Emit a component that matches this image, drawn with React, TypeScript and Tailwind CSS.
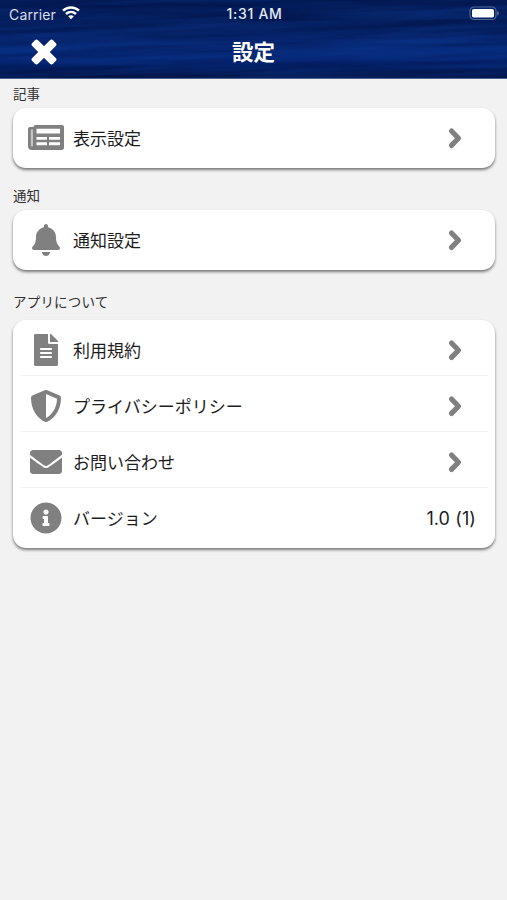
import type { ReactNode } from "react";
import { FaBell, FaEnvelope, FaFileAlt, FaInfoCircle, FaShieldAlt } from "react-icons/fa";

function Newspaper() {
  return (
    <svg className="h-[26px] w-9 shrink-0" viewBox="0 0 36 26">
      <path d="M2 2h5v23H4a4 4 0 0 1-4-4V4a2 2 0 0 1 2-2Z" fill="#808080" />
      <path d="M2.8 4.500h2.200v16a1.100 1.100 0 0 1-2.200 0Z" fill="#c4c4c4" />
      <path
        fillRule="evenodd"
        fill="#808080"
        d="M7.500 0H34a2 2 0 0 1 2 2v20.500a2.500 2.500 0 0 1-2.500 2.500H4a3 3 0 0 0 1.500-2V2a2 2 0 0 1 2-2ZM8.500 3.700v4.800h23.500V3.700ZM8.500 12v2.800h10.500V12ZM21 12v2.800h11V12ZM8.500 17.300v2.900h10.500v-2.900ZM21 17.300v2.900h11v-2.900Z"
      />
    </svg>
  );
}

function Chevron() {
  return (
    <svg className="mr-[25px] h-6 w-4 shrink-0" viewBox="0 0 16 24" fill="none" stroke="#808080" strokeWidth="5.2" strokeLinecap="round" strokeLinejoin="round">
      <path d="M4.500 5L11.500 12.200L4.500 19.400" />
    </svg>
  );
}

function Close() {
  return (
    <svg className="h-[26px] w-[26px]" viewBox="-13 -13 26 26" fill="white">
      <rect x="-14.700" y="-4.100" width="29.400" height="8.200" rx="2.200" transform="rotate(45)" />
      <rect x="-14.700" y="-4.100" width="29.400" height="8.200" rx="2.200" transform="rotate(-45)" />
    </svg>
  );
}

function Row({ icon, label, value, divided }: { icon: ReactNode; label: string; value?: string; divided?: boolean }) {
  return (
    <div className="mx-[7px] flex h-14 items-center border-b border-transparent pt-1 data-[divided=true]:border-[#f1f1f1]" data-divided={!!divided}>
      <div className="ml-[7px] flex w-[38px] shrink-0 justify-center text-[32px] text-[#808080]">{icon}</div>
      <span className="ml-2 grow text-[17px] leading-6 text-[#1c1c1c]">{label}</span>
      {value ? (
        <span className="mr-3 mt-0.5 font-['Inter','Liberation_Sans',sans-serif] text-[18px] leading-6 tracking-[0.1px] text-[#1c1c1c]">{value}</span>
      ) : (
        <Chevron />
      )}
    </div>
  );
}

function Card({ children, className }: { children: ReactNode; className: string }) {
  return (
    <div className={"ml-[13px] w-[482px] rounded-[13px] bg-white shadow-[0_2px_3px_rgba(0,0,0,0.5)] " + className}>
      {children}
    </div>
  );
}

function Heading({ children, className }: { children: ReactNode; className: string }) {
  return <h2 className={"pl-[13px] text-[13.5px] leading-5 text-[#303030] " + className}>{children}</h2>;
}

function Texture() {
  return (
    <svg className="absolute inset-0 h-full w-full" viewBox="0 0 507 79" preserveAspectRatio="none">
      <defs>
        <linearGradient id="sea" x1="0" y1="0" x2="0" y2="1">
          <stop offset="0" stopColor="#041b55" />
          <stop offset="0.3" stopColor="#041d5a" />
          <stop offset="0.5" stopColor="#06256c" />
          <stop offset="0.68" stopColor="#082d80" />
          <stop offset="0.82" stopColor="#04216a" />
          <stop offset="1" stopColor="#021647" />
        </linearGradient>
        <filter id="dark" x="0" y="0" width="100%" height="100%" colorInterpolationFilters="sRGB">
          <feTurbulence type="fractalNoise" baseFrequency="0.006 0.13" numOctaves="3" seed="8" />
          <feColorMatrix values="0 0 0 0 0  0 0 0 0 0.06  0 0 0 0 0.26  2 0 0 0 -0.7" />
        </filter>
        <filter id="light" x="0" y="0" width="100%" height="100%" colorInterpolationFilters="sRGB">
          <feTurbulence type="fractalNoise" baseFrequency="0.006 0.14" numOctaves="3" seed="21" />
          <feColorMatrix values="0 0 0 0 0.05  0 0 0 0 0.23  0 0 0 0 0.58  2 0 0 0 -0.7" />
        </filter>
      </defs>
      <rect width="507" height="79" fill="url(#sea)" />
      <g transform="rotate(-2 253 40)">
        <rect x="-10" y="-20" width="530" height="120" filter="url(#dark)" opacity="0.5" />
        <rect x="-10" y="-20" width="530" height="120" filter="url(#light)" opacity="0.45" />
      </g>
    </svg>
  );
}

export default function App() {
  return (
    <div className="h-[900px] w-[507px] overflow-hidden bg-[#f2f2f2] font-['Noto_Sans_CJK_JP',sans-serif]">
      <header className="relative h-[79px] overflow-hidden border-b border-[#48638d] bg-[#03205f] text-white">
        <Texture />
        <div className="relative grid h-7 grid-cols-3 items-center pl-[9px] pr-[7px] font-['Inter','Liberation_Sans',sans-serif] text-[14px]">
          <div className="flex items-center gap-[6px] text-[#d9dfed]">
            <span className="tracking-[0.15px]">Carrier</span>
            <svg className="-mt-0.5 h-[14px] w-[18px]" viewBox="0 0 18 14" fill="none" stroke="white" strokeWidth="2.500">
              <path d="M1 4.700C5.500.300 12.500.300 17 4.700" />
              <path d="M4 8C7 5.300 11 5.300 14 8" />
              <path d="M6.200 10.300C7.800 8.900 10.200 8.900 11.800 10.300L9 13.300Z" fill="white" stroke="none" />
            </svg>
          </div>
          <span className="-mt-px text-center text-[14px] font-medium tracking-[0.7px] text-[#e6eaf4]">1:31 AM</span>
          <svg className="-mt-0.5 h-[15px] w-[31px] justify-self-end" viewBox="0 0 31 15">
            <rect x="1" y="1" width="26" height="12.500" rx="4" fill="none" stroke="#51658f" strokeWidth="1.200" />
            <rect x="3" y="3" width="22" height="8.500" rx="1.800" fill="white" />
            <path d="M28.300 5v4.500c2-.800 2-3.700 0-4.500Z" fill="#71819f" />
          </svg>
        </div>
        <div className="relative grid h-12 grid-cols-[80px_1fr_80px] items-center">
          <button className="ml-[31px] flex w-[26px]" aria-label="閉じる">
            <Close />
          </button>
          <h1 className="-mt-[3px] text-center text-[21.5px] font-bold leading-8">設定</h1>
        </div>
      </header>
      <main>
        <Heading className="mt-1">記事</Heading>
        <Card className="mt-[5px] h-[60px]">
          <Row icon={<Newspaper />} label="表示設定" />
        </Card>
        <Heading className="mt-[17px]">通知</Heading>
        <Card className="mt-[5px] h-[60px]">
          <Row icon={<FaBell />} label="通知設定" />
        </Card>
        <Heading className="mt-[21px] tracking-[0.2px]">アプリについて</Heading>
        <Card className="mt-[9px] h-[228px]">
          <Row icon={<FaFileAlt />} label="利用規約" divided />
          <Row icon={<FaShieldAlt />} label="プライバシーポリシー" divided />
          <Row icon={<FaEnvelope />} label="お問い合わせ" divided />
          <Row icon={<FaInfoCircle />} label="バージョン" value="1.0 (1)" />
        </Card>
      </main>
    </div>
  );
}
